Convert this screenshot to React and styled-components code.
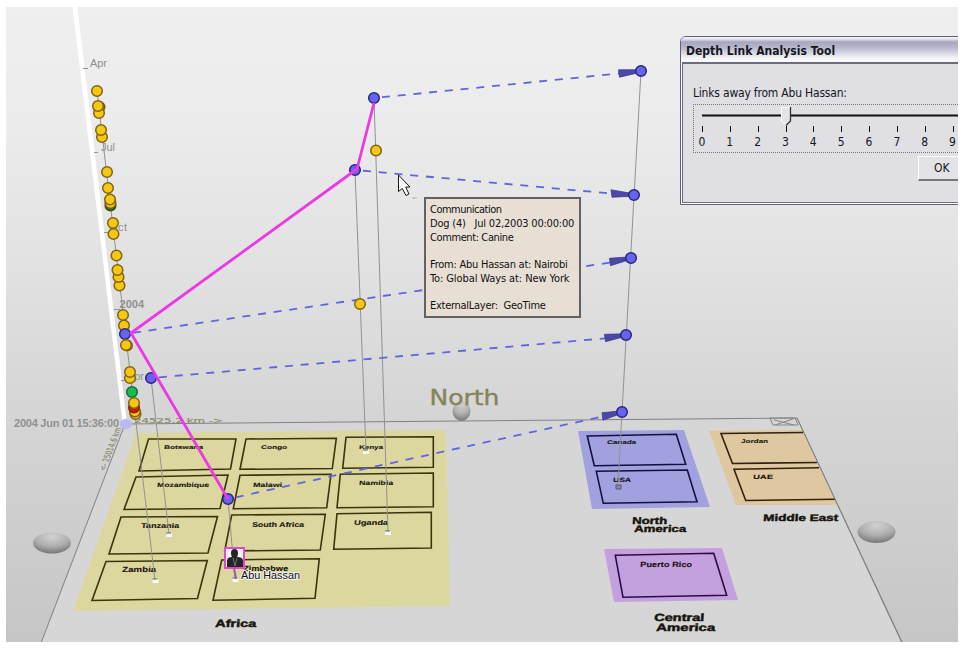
import React from "react";
import styled, { createGlobalStyle } from "styled-components";

const GlobalStyle = createGlobalStyle`
  body { margin: 0; background: #fff; overflow: hidden; }
`;

const Viewport = styled.main`
  position: relative;
  width: 952px;
  height: 635px;
  margin: 7px 0 0 6px;
  overflow: hidden;
  background: linear-gradient(#efefef 0%, #ececec 17%, #e3e3e3 38%, #d5d5d5 64%, #c6c6c6 100%);
`;

const Scene = styled.svg`
  display: block;
  width: 952px;
  height: 635px;
`;

const MapText = styled.text`
  font-family: "Liberation Sans", Arial, sans-serif;
  font-weight: bold;
  font-size: 10px;
  fill: #17140c;
  stroke: #17140c;
  stroke-width: ${(p) => (p.$region ? 0.45 : 0.15)}px;
`;

const StampText = styled.text`
  font-family: "Liberation Sans", Arial, sans-serif;
  font-size: 11px;
  font-weight: ${(p) => (p.$bold ? "bold" : "normal")};
  fill: #909090;
`;

const WideText = styled.text`
  font-family: "DejaVu Sans", Verdana, sans-serif;
  font-size: ${(p) => p.$size}px;
  fill: ${(p) => p.$color || "#84845a"};
  stroke: ${(p) => p.$color || "#84845a"};
  stroke-width: ${(p) => p.$weight || 0}px;
`;

const PersonText = styled.text`
  font-family: "Liberation Sans", Arial, sans-serif;
  font-size: 11px;
  fill: #111;
  stroke: #f1f1ef;
  stroke-width: 2px;
  paint-order: stroke;
`;

const Tooltip = styled.aside`
  position: absolute;
  left: 418px;
  top: 190px;
  width: 157px;
  height: 121px;
  box-sizing: border-box;
  padding: 4px 0 0 4px;
  border: 2px solid #65625e;
  background: rgba(231, 223, 212, 0.97);
`;

const TipLine = styled.div`
  height: 13.75px;
  font: 11px/13.75px "DejaVu Sans Condensed", "DejaVu Sans", Tahoma, sans-serif;
  font-stretch: condensed;
  letter-spacing: ${(p) => p.$track || 0}px;
  white-space: pre;
  color: #111;
`;

const Dialog = styled.section`
  position: absolute;
  left: 674px;
  top: 29px;
  width: 320px;
  height: 169px;
  box-sizing: border-box;
  border: 1px solid #62627a;
  border-top-left-radius: 6px;
  background: #fff;
  font-family: "DejaVu Sans Condensed", "DejaVu Sans", Tahoma, sans-serif;
  font-stretch: condensed;
  color: #161620;
`;

const TitleBar = styled.header`
  height: 25px;
  box-sizing: border-box;
  padding: 1px 0 0 5px;
  border-top-left-radius: 5px;
  background: linear-gradient(#f4f4fa 0, #e4e4ee 2px, #a6a6c0 5px, #b4b4ca 10px, #dddde7 17px, #fafafd 23px);
  font-size: 12px;
  font-weight: bold;
  line-height: 27px;
  letter-spacing: 0.03px;
`;

const DialogBody = styled.div`
  display: flex;
  flex-direction: column;
  height: 141px;
  box-sizing: border-box;
  margin-left: 1px;
  padding: 22px 0 0 10px;
  border: 1px solid #6b6b83;
  border-top-width: 2px;
  background: #dfdfe4;
`;

const FieldLabel = styled.label`
  height: 18px;
  font-size: 12px;
  line-height: 15px;
  letter-spacing: -0.2px;
`;

const SliderBox = styled.div`
  height: 49px;
  box-sizing: border-box;
  border: 1px dotted #777;
  padding: 2px 0 0 0;
`;

const SliderTrack = styled.svg`
  display: block;
  width: 300px;
  height: 28px;
`;

const Numbers = styled.div`
  display: grid;
  grid-template-columns: repeat(10, 27.85px);
  margin-left: -6px;
  font-size: 12px;
  line-height: 14px;
  text-align: center;
`;

const OkButton = styled.button`
  width: 75px;
  height: 25px;
  margin: 3px 0 0 225px;
  padding: 0 0 0 15px;
  border: 1px solid;
  border-color: #fff #8d8d8d #777 #fff;
  border-bottom-width: 2px;
  background: #e3e3e5;
  font: 12px/20px "DejaVu Sans Condensed", "DejaVu Sans", Tahoma, sans-serif;
  font-stretch: condensed;
  text-align: left;
  color: #161620;
`;

const regions = [
  { fill: "#dcd69f", points: "136,433 446,430 450,606 73,611" },
  { fill: "#a1a1df", points: "578,431 684,430 710,507 592,509" },
  { fill: "#c5a0df", points: "604,549 722,548 738,600 614,602" },
  { fill: "#dfc7a0", points: "709,431 802,430 837,505 736,505" },
];

const plots = [
  ["148.5,439 236,439 230.5,469 139,471", "#3b340c"],
  ["136,477 228,475 220,508.5 124,509.5", "#3b340c"],
  ["121,517 217.5,516.5 208,553 109,554", "#3b340c"],
  ["106,561.5 207.3,560.5 197.5,598.5 92,600.5", "#3b340c"],
  ["246,439 336.3,438.3 332.3,468.5 240,469.3", "#3b340c"],
  ["240,475.3 331,474.3 326.7,507.7 233.3,508.7", "#3b340c"],
  ["231.7,515 325.3,514.3 320.3,550 224.7,551", "#3b340c"],
  ["221.7,560 319.3,558.7 315,598.3 213,600.3", "#3b340c"],
  ["346,437.3 433.3,436.7 433.3,467.3 342.7,468.3", "#3b340c"],
  ["340.3,474.3 433.3,473 433.3,506.7 337,507.7", "#3b340c"],
  ["337,513.7 431.3,512.3 431.3,548 333.7,549.3", "#3b340c"],
  ["587.3,436 676.3,434.3 685.7,464.3 594.3,465.7", "#11113f"],
  ["596.3,471.3 687.3,470 697,501.7 603.3,503.3", "#11113f"],
  ["615.3,555.3 713.7,553.3 726.7,595.3 623,597.3", "#2c0b45"],
];

const labels = [
  ["Botswana", 164, 449.3, 39, 5.4],
  ["Mozambique", 157, 487, 52, 6.2],
  ["Tanzania", 141, 528, 38, 7],
  ["Zambia", 122, 572.3, 34, 7.6],
  ["Congo", 261, 449.3, 26, 5.4],
  ["Malawi", 253, 486.5, 29, 6.2],
  ["South Africa", 252, 526.5, 52, 7],
  ["Zimbabwe", 243, 570.5, 45, 7.4],
  ["Kenya", 359, 449.3, 24, 5.4],
  ["Namibia", 359, 484.8, 34, 6.2],
  ["Uganda", 354, 524.5, 34, 7],
  ["Canada", 607, 444, 29, 5.4],
  ["USA", 613, 481.5, 18, 6.2],
  ["Jordan", 741, 442.8, 27, 5.4],
  ["UAE", 753, 479.3, 20, 6.2],
  ["Puerto Rico", 640, 567, 52, 7.4],
  ["Africa", 215, 627.3, 41, 10.4],
  ["North", 632, 523.7, 35, 9.8],
  ["America", 634, 531.7, 52, 9.6],
  ["Middle East", 763, 520.8, 75, 9.6],
  ["Central", 654, 620.8, 50, 10.4],
  ["America", 656, 631, 59, 10.4],
];

const links = [
  [374, 98, 624, 73, 8],
  [355, 170, 616, 194, 8],
  [125, 334, 614, 262, 8],
  [151, 378, 609, 338, 8],
  [228, 499, 605, 416, 8],
];

const arrows = [
  [618.5, 73.5, 641, 71],
  [611, 193.5, 634, 195],
  [609.5, 262, 631, 258],
  [604.5, 338, 626, 335],
  [602, 416.5, 622, 412],
];

const events = [
  [97, 91, "gold"], [99.5, 107, "brown"], [99, 113, "gold"], [98, 106, "gold"],
  [102, 137, "gold"], [101, 130, "gold"], [107, 172, "gold"], [108, 188, "gold"],
  [110.5, 205.5, "dark"], [110.5, 203, "gold"], [110, 199.5, "gold"], [113, 223, "gold"], [113.5, 234, "gold"],
  [116.5, 255.5, "gold"], [119.5, 285.5, "gold"], [118.5, 277, "gold"], [117.5, 270, "gold"],
  [123, 315, "gold"], [124, 325.5, "gold"], [125, 334, "blue"], [127, 345.5, "gold"], [126, 345, "gold"],
  [130, 378, "gold"], [130, 372, "gold"], [132, 392, "green"],
  [135.5, 414, "gold"], [135, 411.5, "gold"], [134, 407.5, "red"], [134, 403, "gold"],
  [376, 150.5, "gold"], [360, 304, "gold"],
  [374, 98, "blue"], [355, 170, "blue"], [151, 378, "blue"], [228, 499, "blue"],
];

const palette = {
  gold: ["#f7c713", "#806413"],
  brown: ["#a77d08", "#755a0b"],
  dark: ["#286822", "#285220"],
  green: ["#14bf4b", "#176c38"],
  red: ["#c91d0d", "#8b2417"],
  blue: ["#6863ee", "#28267d"],
};

const markers = [[366, 452], [388, 533], [169, 535], [155.5, 581], [235.5, 580]];

function EventDot({ x, y, kind }) {
  const [fill, stroke] = palette[kind];
  return <ellipse cx={x} cy={y} rx="5.3" ry="5.2" fill={fill} stroke={stroke} strokeWidth="1.5" />;
}

function Arrow({ x1, y1, x2, y2 }) {
  return (
    <g>
      <path d={`M${x1} ${y1 - 3.7}L${x2} ${y2 - 1.2}V${y2 + 1.2}L${x1 + 1} ${y1 + 3.7}Z`} fill="#4c48a8" stroke="#3c3894" strokeWidth=".8" />
      <EventDot x={x2} y={y2} kind="blue" />
    </g>
  );
}

function MapLabel({ data: [text, x, y, width, size] }) {
  return (
    <MapText $region={size > 9} transform={`translate(${x} ${y}) skewX(-4) scale(1 ${size / 10})`} textLength={width} lengthAdjust="spacingAndGlyphs">
      {text}
    </MapText>
  );
}

function TimelineScene() {
  return (
    <Scene viewBox="6 7 952 635">
      <defs>
        <radialGradient id="sphere" cx="50%" cy="20%" r="80%">
          <stop offset="0" stopColor="#d2d2d2" />
          <stop offset=".55" stopColor="#b0b0b0" />
          <stop offset="1" stopColor="#777" />
        </radialGradient>
      </defs>
      <polygon points="125,424 797,418 902,643 41,643" fill="#d6d6d6" stroke="#818181" />
      <ellipse cx="52" cy="543" rx="19" ry="10.5" fill="url(#sphere)" />
      <ellipse cx="876.5" cy="532" rx="19" ry="11" fill="url(#sphere)" />
      <ellipse cx="461.5" cy="411" rx="9" ry="10" fill="url(#sphere)" />
      <WideText transform="translate(429.5 404.5) scale(1 .92)" $size={22.5} $weight={0.4} textLength="70" lengthAdjust="spacingAndGlyphs">North</WideText>

      {regions.map((r) => <polygon key={r.points} {...r} />)}
      {plots.map(([points, color]) => <polygon key={points} points={points} fill="none" stroke={color} strokeWidth="1.6" />)}
      <path d="M803 432.5L721 433.5L732.5 463.5L817 462.5M819 467.7L734 469.3L745.7 500.5L835 499.3" fill="none" stroke="#30220b" strokeWidth="1.6" />
      <path d="M797 418L902 642" stroke="#808080" />
      <path d="M770 418h25l3 7h-25ZM774 420l20 5M793 419l-18 6" fill="none" stroke="#858585" />
      {labels.map((data) => <MapLabel key={`${data[0]}-${data[1]}`} data={data} />)}

      <path d="M72.5 7H77.3L127 423H122.5Z" fill="#fff" />
      <g stroke="#929292" strokeWidth="1">
        <path d="M83 68.5h5M94 152.5h4M104 232.5h6M114 309.5h6M121 380.5h5" />
        <path d="M97 91L135 414L155 580M151 378L169 534M355 170L366 451M374 98L388 532M228 499L235 580M641 71L622 412L618 485" fill="none" />
      </g>
      <StampText x="90" y="67" textLength="17">Apr</StampText>
      <StampText x="101" y="151" textLength="14">Jul</StampText>
      <StampText x="109" y="231" textLength="18">Oct</StampText>
      <StampText x="119.5" y="308" $bold textLength="24.5">2004</StampText>
      <StampText x="127" y="380" textLength="17">Apr</StampText>
      <StampText x="14" y="427" $bold textLength="105">2004 Jun 01 15:36:00</StampText>
      <WideText transform="translate(134 423.3) scale(1 .68)" $size={10} $weight={0.25} $color="#8b896a" textLength="89" lengthAdjust="spacingAndGlyphs">24525.2 km -&gt;</WideText>
      <WideText transform="translate(105 471) rotate(-69) skewX(12)" $size={8.5} $weight={0.2} $color="#8b896a" textLength="46" lengthAdjust="spacingAndGlyphs">&lt;- 15014.6 km</WideText>
      <ellipse cx="126" cy="424" rx="6" ry="5" fill="#b9b9f6" />

      {links.map(([x1, y1, x2, y2, start]) => (
        <line key={`${x1}-${y1}`} x1={x1} y1={y1} x2={x2} y2={y2} stroke="#6264df" strokeWidth="1.8" strokeDasharray="8 7.8" strokeDashoffset={-start} />
      ))}
      {arrows.map(([x1, y1, x2, y2]) => <Arrow key={y2} x1={x1} y1={y1} x2={x2} y2={y2} />)}
      {events.map(([x, y, kind], i) => <EventDot key={i} x={x} y={y} kind={kind} />)}
      <path d="M374 103L357 169L131 333L228 499" fill="none" stroke="#eb39e4" strokeWidth="2.8" strokeLinejoin="round" />
      {markers.map(([x, y]) => (
        <g key={x}>
          <rect x={x - 3} y={y - 2} width="6" height="4" fill="#f7f7f3" />
          <path d={`M${x - 3} ${y - 2}h5`} stroke="#67675e" />
        </g>
      ))}
      <path d="M616 485h5v4h-5Z" fill="#898998" stroke="#555575" />
      <path d="M234 568L236 579" stroke="#a35baa" strokeWidth="2" />
      <rect x="225" y="548" width="19" height="20" fill="#f3f1ef" stroke="#e347d1" strokeWidth="2" />
      <path d="M227 567V560Q228 557 232 557H237Q242 557 243 560V567ZM231 553Q231 549 234.5 549T238 553Q238 558 234.5 558T231 553Z" fill="#252525" />
      <path d="M233 558L235 566L237 558" fill="none" stroke="#858585" strokeWidth=".8" />
      <PersonText x="241" y="579" textLength="59" lengthAdjust="spacingAndGlyphs">Abu Hassan</PersonText>
      <path d="M412 198h5" stroke="#aaa" />
      <path d="M398.5 175V191.5L402.3 188.5L406 195.5L409 194L405.7 187H410Z" fill="#fff" stroke="#151515" />
    </Scene>
  );
}

function CommunicationTip() {
  return (
    <Tooltip>
      <TipLine $track={-0.5}>Communication</TipLine>
      <TipLine $track={-0.2}>Dog (4)   Jul 02,2003 00:00:00</TipLine>
      <TipLine $track={-0.4}>Comment: Canine</TipLine>
      <TipLine> </TipLine>
      <TipLine $track={-0.24}>From: Abu Hassan at: Nairobi</TipLine>
      <TipLine $track={-0.1}>To: Global Ways at: New York</TipLine>
      <TipLine> </TipLine>
      <TipLine $track={-0.28}>ExternalLayer:  GeoTime</TipLine>
    </Tooltip>
  );
}

function DepthDialog() {
  const ticks = Array.from({ length: 10 }, (_, i) => i);
  return (
    <Dialog>
      <TitleBar>Depth Link Analysis Tool</TitleBar>
      <DialogBody>
        <FieldLabel>Links away from Abu Hassan:</FieldLabel>
        <SliderBox>
          <SliderTrack viewBox="0 0 300 28">
            <path d="M8 8.5H300" stroke="#111" strokeWidth="2" />
            <path d="M8 7.5H300" stroke="#777" />
            {ticks.map((i) => <path key={i} d={`M${Math.round(8 + i * 27.85) + 0.5} 19v6`} stroke="#111" />)}
            <path d="M87.5 .5H96.5V14L92 18.5L87.5 14Z" fill="#e4e4e7" stroke="#fff" />
            <path d="M96.5 0V14L92 18.5" fill="none" stroke="#333" strokeWidth="1.3" />
          </SliderTrack>
          <Numbers>{ticks.map((i) => <span key={i}>{i}</span>)}</Numbers>
        </SliderBox>
        <OkButton>OK</OkButton>
      </DialogBody>
    </Dialog>
  );
}

export default function App() {
  return (
    <>
      <GlobalStyle />
      <Viewport>
        <TimelineScene />
        <CommunicationTip />
        <DepthDialog />
      </Viewport>
    </>
  );
}
